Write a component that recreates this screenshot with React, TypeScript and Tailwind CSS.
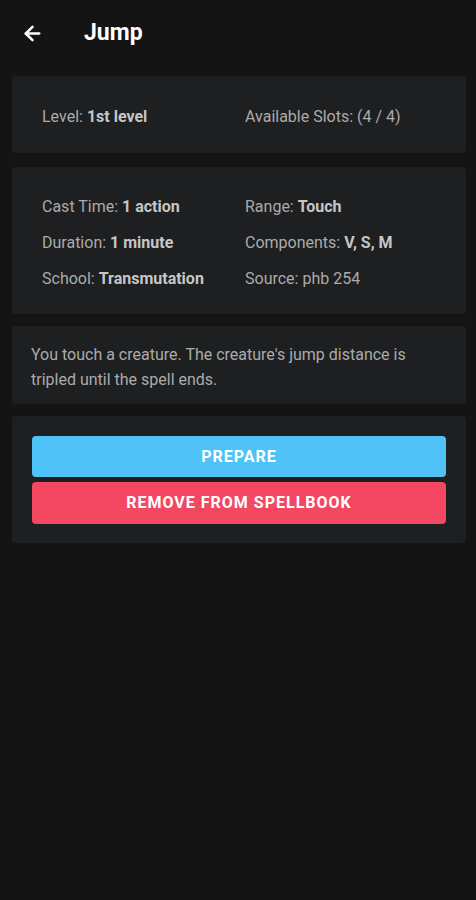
import { ArrowLeft } from 'lucide-react'

const details: [string, string, boolean][] = [
  ['Cast Time:', '1 action', true],
  ['Range:', 'Touch', true],
  ['Duration:', '1 minute', true],
  ['Components:', 'V, S, M', true],
  ['School:', 'Transmutation', true],
  ['Source:', 'phb 254', false],
]

function Field({ label, value, bold }: { label: string; value: string; bold: boolean }) {
  return (
    <div className="text-[16px] leading-[21px] text-[#ababab]">
      {label} <span className={bold ? 'font-bold text-[#c6c6c6]' : ''}>{value}</span>
    </div>
  )
}

export default function App() {
  return (
    <div className="min-h-[900px] w-[476px] bg-[#141414] font-['Roboto',sans-serif]">
      <div className="flex h-[64px] items-center pt-[2px]">
        <button className="ml-[21px] text-white">
          <ArrowLeft className="h-[23px] w-[23px]" strokeWidth={2.6} />
        </button>
        <h1 className="ml-[40px] text-[23px] font-bold text-white">Jump</h1>
      </div>

      <div className="ml-[12px] mr-[10px] mt-[12px] flex flex-col">
        <div className="grid grid-cols-[203px_1fr] rounded bg-[#1e1f21] px-[30px] pb-[26px] pt-[30px]">
          <Field label="Level:" value="1st level" bold />
          <div className="text-[16px] leading-[21px] text-[#ababab]">Available Slots: (4 / 4)</div>
        </div>

        <div className="mt-[14px] grid grid-cols-[203px_1fr] gap-y-[15px] rounded bg-[#1e1f21] px-[30px] pb-[25px] pt-[29px]">
          {details.map(([l, v, b]) => (
            <Field key={l} label={l} value={v} bold={b} />
          ))}
        </div>

        <div className="mt-[12px] rounded bg-[#1e1f21] px-[19px] pb-[12px] pt-[16px] text-[16px] leading-[25px] text-[#ababab]">
          You touch a creature. The creature's jump distance is tripled until the spell ends.
        </div>

        <div className="mt-[12px] flex flex-col gap-[5px] rounded bg-[#1e1f21] px-[20px] pb-[19px] pt-[20px]">
          <button className="h-[41px] rounded bg-[#4fc3f7] text-[16px] font-bold tracking-[1px] text-white">
            PREPARE
          </button>
          <button className="h-[42px] rounded bg-[#f44862] text-[16px] font-bold tracking-[1px] text-white">
            REMOVE FROM SPELLBOOK
          </button>
        </div>
      </div>
    </div>
  )
}
